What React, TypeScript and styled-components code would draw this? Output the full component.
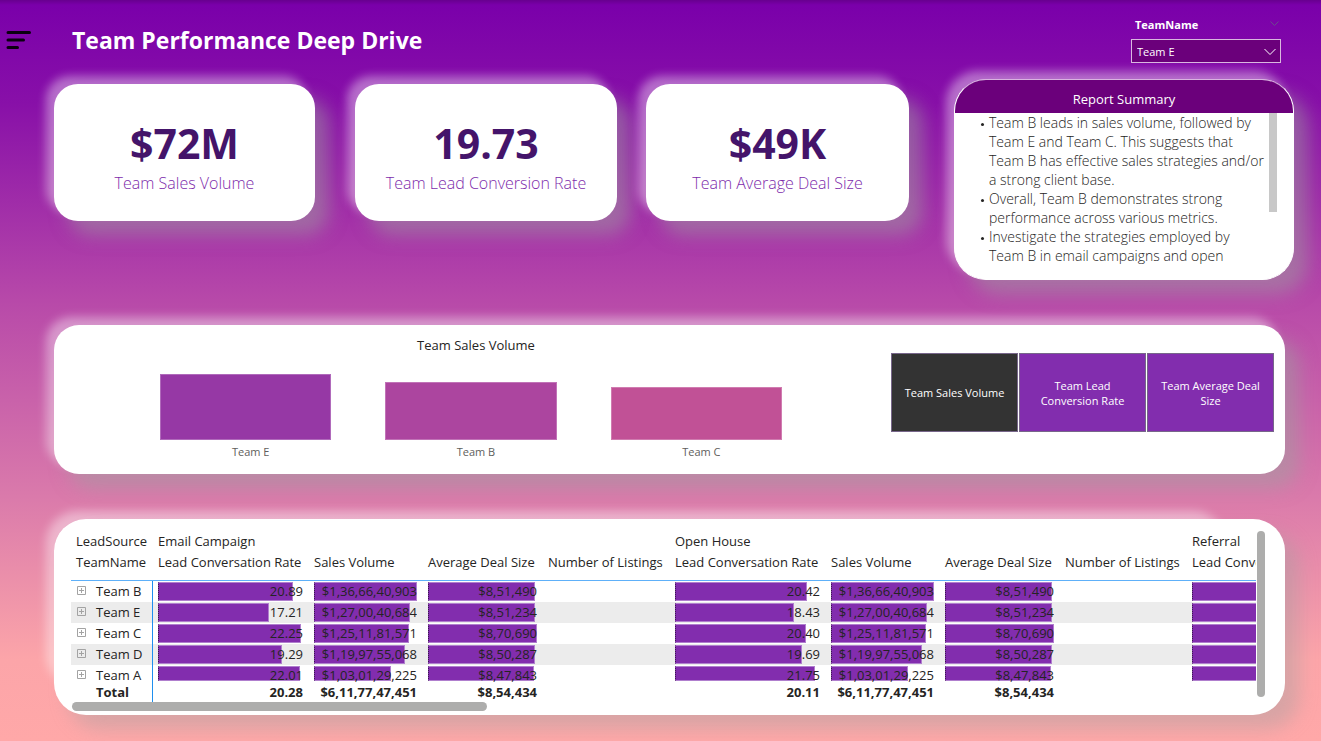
import React from "react";
import styled, { createGlobalStyle, css } from "styled-components";

const PURPLE = "#822dae";
const PLUM = "#6b007b";

const GlobalStyle = createGlobalStyle`
  *, *::before, *::after { box-sizing: border-box; }
  html, body { margin: 0; }
  body {
    min-height: 100vh;
    font-family: "Open Sans", "Noto Sans", sans-serif;
    font-size: 13px;
    color: #252423;
    background: linear-gradient(180deg, #68008f 0px, #7a00aa 5px, #8810a8 14%, #b84aa9 41%, #da7aab 67%, #fca5a9 89%, #ffa8a8 100%) no-repeat;
  }
  button, select { font: inherit; margin: 0; }
  h1, h2, p, ul { margin: 0; padding: 0; }
`;

const raised = css`
  background: #fff;
  box-shadow:
    -8px -8px 10px rgba(255, 255, 255, 0.4),
    14px 14px 18px rgba(160, 160, 160, 0.5);
`;

const Page = styled.div`
  position: relative;
  z-index: 0;
  min-height: 100vh;
  padding-bottom: 26px;
`;

const Header = styled.header`
  display: flex;
  align-items: flex-start;
  height: 79px;
  padding: 0 40px 0 6px;
`;

const MenuButton = styled.button`
  display: flex;
  width: 26px;
  height: 20px;
  margin-top: 30px;
  padding: 0;
  border: 0;
  background: none;
`;

const Title = styled.h1`
  flex: 1;
  margin-left: 40px;
  padding-top: 24px;
  color: #fff;
  font-size: 23px;
  line-height: 32px;
  font-weight: 700;
`;

const Slicer = styled.div`
  width: 150px;
  padding-top: 17px;
  color: #fff;
`;

const SlicerLabel = styled.label`
  display: flex;
  justify-content: space-between;
  height: 16px;
  margin-bottom: 6px;
  padding: 0 2px 0 4px;
  font-size: 11px;
  line-height: 16px;
  font-weight: 700;
`;

const SlicerMenuIcon = styled.svg`
  margin-top: 4px;
`;

const SelectBox = styled.div`
  position: relative;
`;

const Select = styled.select`
  display: block;
  width: 100%;
  height: 24px;
  padding: 0 5px;
  appearance: none;
  border: 1px solid #d9b8df;
  border-radius: 0;
  background: ${PLUM};
  color: #fff;
  font-size: 11px;
`;

const SelectArrow = styled.svg`
  position: absolute;
  top: 9px;
  right: 5px;
  pointer-events: none;
`;

const Overview = styled.section`
  display: grid;
  grid-template-columns: 261fr 40px 262fr 29px 263fr 45px 340fr;
  align-items: start;
  padding: 0 27px 0 54px;
`;

const KpiCard = styled.article<{ $column: number }>`
  ${raised}
  grid-column: ${(p) => p.$column};
  min-height: 137px;
  margin-top: 5px;
  padding: 35px 12px 24px;
  border-radius: 24px;
  text-align: center;
`;

const KpiValue = styled.p`
  color: #44146a;
  font-size: 41px;
  line-height: 48px;
  font-weight: 700;
`;

const KpiLabel = styled.p`
  margin-top: 4px;
  color: #7d2bab;
  font-size: 16px;
  line-height: 24px;
  font-weight: 350;
  white-space: nowrap;
`;

const Summary = styled.article`
  ${raised}
  grid-column: 7;
  overflow: hidden;
  padding-bottom: 15px;
  border: 1px solid #d9b3e0;
  border-color: #d9b3e0 #fff #fff;
  border-radius: 32px;
`;

const SummaryTitle = styled.h2`
  height: 33px;
  background: ${PLUM};
  color: #fff;
  font-size: 13px;
  line-height: 38px;
  font-weight: 400;
  text-align: center;
`;

const SummaryBody = styled.div`
  display: flex;
  height: 151px;
  padding: 0 16px 0 20px;
`;

const SummaryList = styled.ul`
  flex: 1;
  overflow: hidden;
  padding-left: 14px;
  list-style: none;
  font-size: 14px;
  line-height: 19px;
  font-weight: 350;
  white-space: nowrap;
`;

const SummaryItem = styled.li`
  position: relative;

  &::before {
    content: "";
    position: absolute;
    top: 10px;
    left: -8px;
    width: 3px;
    height: 3px;
    border-radius: 50%;
    background: #252423;
  }
`;

const SummaryThumb = styled.div`
  width: 8px;
  height: 99px;
  background: #c8c8c8;
`;

const ChartPanel = styled.section`
  ${raised}
  display: flex;
  min-height: 149px;
  margin: 45px 36px 0 54px;
  padding: 0 11px 0 7px;
  border-radius: 25px;
`;

const Chart = styled.figure`
  flex: 1;
  margin: 0;
  padding: 10px 82px 0 72px;
`;

const ChartTitle = styled.figcaption`
  height: 20px;
  padding-left: 10px;
  line-height: 20px;
  text-align: center;
`;

const Bars = styled.div`
  display: grid;
  grid-template-columns: repeat(3, 1fr);
  align-items: end;
  justify-items: center;
  height: 105px;
`;

const BarGroup = styled.div`
  width: 76%;
`;

const Bar = styled.div<{ $color: string }>`
  background: ${(p) => p.$color};
  border: 1px solid rgba(255, 255, 255, 0.25);
`;

const BarLabel = styled.div`
  padding: 4px 0 0 10px;
  color: #605e5c;
  font-size: 11px;
  line-height: 16px;
  text-align: center;
`;

const MetricButtons = styled.div`
  display: grid;
  grid-template-columns: repeat(3, 1fr);
  gap: 1px;
  width: 383px;
  height: 79px;
  margin-top: 28px;
`;

const MetricButton = styled.button<{ $active?: boolean }>`
  padding: 0 12px;
  border: 1px solid #77668a;
  background: ${(p) => (p.$active ? "#333" : PURPLE)};
  color: #fff;
  font-size: 11px;
  line-height: 15px;
`;

const MatrixPanel = styled.section`
  position: relative;
  display: grid;
  grid-template-columns: minmax(0, 1fr) 8px;
  column-gap: 1px;
  margin: 45px 36px 0 54px;
  padding: 12px 20px 4px 17px;
  border-radius: 32px;
  background: #fff;
  box-shadow: 14px 14px 18px rgba(160, 160, 160, 0.4);

  &::before {
    content: "";
    position: absolute;
    z-index: -1;
    inset: 0 52px 20px 0;
    border-radius: 32px;
    box-shadow: -8px -8px 10px rgba(255, 255, 255, 0.4);
  }
`;

const MatrixView = styled.div`
  overflow: hidden;
  height: 171px;
`;

const VerticalThumb = styled.div`
  width: 8px;
  height: 166px;
  border-radius: 4px;
  background: #adadac;
`;

const HorizontalThumb = styled.div`
  width: 35%;
  height: 9px;
  margin-left: 1px;
  border-radius: 5px;
  background: #adadac;
`;

const Matrix = styled.table`
  width: 1272px;
  table-layout: fixed;
  border-collapse: separate;
  border-spacing: 0;
  white-space: nowrap;
`;

const HeadCell = styled.th<{ $last?: boolean }>`
  height: ${(p) => (p.$last ? 29 : 21)}px;
  padding: 0 0 0 5px;
  border-bottom: ${(p) => (p.$last ? "1px solid #5eb0f9" : "0")};
  vertical-align: top;
  font-weight: 400;
  line-height: 21px;
  text-align: left;
`;

const BodyRow = styled.tr<{ $shaded: boolean }>`
  background: ${(p) => (p.$shaded ? "#ececec" : "#fff")};
`;

const NameCell = styled.th<{ $total?: boolean }>`
  padding: 0 0 0 ${(p) => (p.$total ? 25 : 6)}px;
  border-right: 1px solid #1f8fef;
  font-weight: ${(p) => (p.$total ? 700 : 400)};
  line-height: 20px;
  text-align: left;
`;

const NameInner = styled.div<{ $clipped: boolean }>`
  display: flex;
  gap: 10px;
  height: ${(p) => (p.$clipped ? 17 : 21)}px;
  overflow: hidden;
  line-height: 21px;
`;

const ExpandButton = styled.button`
  flex: none;
  width: 9px;
  height: 9px;
  margin-top: 5px;
  padding: 0;
  border: 0;
  background: none;

  svg { display: block; }
`;

const ValueCell = styled.td`
  padding: 0 6px 0 5px;
  text-align: right;
`;

const ValueInner = styled.div<{ $clipped: boolean }>`
  position: relative;
  height: ${(p) => (p.$clipped ? 17 : 21)}px;
  overflow: hidden;
  line-height: 21px;
`;

const DataBar = styled.span`
  position: absolute;
  top: 1px;
  bottom: 1px;
  left: 0;
  background: ${PURPLE};
  border: 1px solid #b07fce;
  border-left: 1px dotted #3a1a4c;
`;

const ValueText = styled.span`
  position: relative;
`;

const TotalCell = styled.td`
  height: 20px;
  padding: 0 6px 0 5px;
  font-weight: 700;
  line-height: 20px;
  text-align: right;
`;

const kpis = [
  { value: "$72M", label: "Team Sales Volume", column: 1 },
  { value: "19.73", label: "Team Lead Conversion Rate", column: 3 },
  { value: "$49K", label: "Team Average Deal Size", column: 5 },
];

const summary = [
  ["Team B leads in sales volume, followed by", "Team E and Team C. This suggests that", "Team B has effective sales strategies and/or", "a strong client base."],
  ["Overall, Team B demonstrates strong", "performance across various metrics."],
  ["Investigate the strategies employed by", "Team B in email campaigns and open"],
];

const bars = [
  { name: "Team E", height: 66, color: "#9638a5" },
  { name: "Team B", height: 58, color: "#ac459f" },
  { name: "Team C", height: 53, color: "#c15196" },
];

const columns = ["Lead Conversation Rate", "Sales Volume", "Average Deal Size", "Number of Listings"];
const columnWidths = [156, 114, 120, 127];

const rows = [
  { team: "Team B", email: 20.89, open: 20.42, sales: "$1,36,66,40,903", salesBar: 100, deal: "$8,51,490", dealBar: 98 },
  { team: "Team E", email: 17.21, open: 18.43, sales: "$1,27,00,40,684", salesBar: 93, deal: "$8,51,234", dealBar: 98 },
  { team: "Team C", email: 22.25, open: 20.4, sales: "$1,25,11,81,571", salesBar: 92, deal: "$8,70,690", dealBar: 100 },
  { team: "Team D", email: 19.29, open: 19.69, sales: "$1,19,97,55,068", salesBar: 88, deal: "$8,50,287", dealBar: 98 },
  { team: "Team A", email: 22.01, open: 21.75, sales: "$1,03,01,29,225", salesBar: 75, deal: "$8,47,843", dealBar: 97 },
];

const MAX_RATE = 22.5;

function Value({ text, percent, clipped }: { text?: string; percent: number; clipped: boolean }) {
  return (
    <ValueCell>
      <ValueInner $clipped={clipped}>
        <DataBar style={{ width: `${percent}%` }} />
        {text && <ValueText>{text}</ValueText>}
      </ValueInner>
    </ValueCell>
  );
}

function MatrixTable() {
  return (
    <Matrix>
      <colgroup>
        <col style={{ width: 82 }} />
        {[...columnWidths, ...columnWidths, columnWidths[0]].map((w, i) => (
          <col key={i} style={{ width: w }} />
        ))}
      </colgroup>
      <thead>
        <tr>
          <HeadCell scope="col">LeadSource</HeadCell>
          <HeadCell scope="colgroup" colSpan={4}>Email Campaign</HeadCell>
          <HeadCell scope="colgroup" colSpan={4}>Open House</HeadCell>
          <HeadCell scope="colgroup">Referral</HeadCell>
        </tr>
        <tr>
          <HeadCell scope="col" $last>TeamName</HeadCell>
          {[...columns, ...columns, columns[0]].map((name, i) => (
            <HeadCell key={i} scope="col" $last>{name}</HeadCell>
          ))}
        </tr>
      </thead>
      <tbody>
        {rows.map((row, i) => {
          const clipped = i === rows.length - 1;
          return (
            <BodyRow key={row.team} $shaded={i % 2 === 1}>
              <NameCell scope="row">
                <NameInner $clipped={clipped}>
                  <ExpandButton aria-label={`Expand ${row.team}`}>
                    <svg width="9" height="9" viewBox="0 0 9 9" fill="none" stroke="#a3a3a3">
                      <path d="M0.5 0.5h8v8h-8zM2 4.5h5M4.5 2v5" />
                    </svg>
                  </ExpandButton>
                  {row.team}
                </NameInner>
              </NameCell>
              {[row.email, row.open].map((rate, g) => (
                <React.Fragment key={g}>
                  <Value text={rate.toFixed(2)} percent={(rate / MAX_RATE) * 100} clipped={clipped} />
                  <Value text={row.sales} percent={row.salesBar} clipped={clipped} />
                  <Value text={row.deal} percent={row.dealBar} clipped={clipped} />
                  <td />
                </React.Fragment>
              ))}
              <Value percent={95} clipped={clipped} />
            </BodyRow>
          );
        })}
      </tbody>
      <tfoot>
        <tr>
          <NameCell scope="row" $total>Total</NameCell>
          {["20.28", "20.11"].map((rate) => (
            <React.Fragment key={rate}>
              <TotalCell>{rate}</TotalCell>
              <TotalCell>$6,11,77,47,451</TotalCell>
              <TotalCell>$8,54,434</TotalCell>
              <TotalCell />
            </React.Fragment>
          ))}
          <TotalCell />
        </tr>
      </tfoot>
    </Matrix>
  );
}

export default function App() {
  return (
    <Page>
      <GlobalStyle />
      <Header>
        <MenuButton aria-label="Menu">
          <svg width="26" height="20" viewBox="0 0 26 20" stroke="#0a0010" strokeWidth="3" strokeLinecap="round">
            <path d="M2 2.5H23.5M2 10H17.5M2 17.5H11.5" />
          </svg>
        </MenuButton>
        <Title>Team Performance Deep Drive</Title>
        <Slicer>
          <SlicerLabel htmlFor="team">
            TeamName
            <SlicerMenuIcon width="9" height="6" viewBox="0 0 9 6" fill="none" stroke="#6b4a8c">
              <path d="M0.5 0.5l4 4 4-4" />
            </SlicerMenuIcon>
          </SlicerLabel>
          <SelectBox>
            <Select id="team" defaultValue="Team E">
              <option>Team E</option>
            </Select>
            <SelectArrow width="12" height="8" viewBox="0 0 12 8" fill="none" stroke="#fff">
              <path d="M0.5 1l5.5 5.5L11.5 1" />
            </SelectArrow>
          </SelectBox>
        </Slicer>
      </Header>

      <Overview>
        {kpis.map((kpi) => (
          <KpiCard key={kpi.label} $column={kpi.column}>
            <KpiValue>{kpi.value}</KpiValue>
            <KpiLabel>{kpi.label}</KpiLabel>
          </KpiCard>
        ))}
        <Summary>
          <SummaryTitle>Report Summary</SummaryTitle>
          <SummaryBody>
            <SummaryList>
              {summary.map((lines) => (
                <SummaryItem key={lines[0]}>
                  {lines.map((line) => (
                    <React.Fragment key={line}>
                      {line}
                      <br />
                    </React.Fragment>
                  ))}
                </SummaryItem>
              ))}
            </SummaryList>
            <SummaryThumb />
          </SummaryBody>
        </Summary>
      </Overview>

      <ChartPanel>
        <Chart>
          <ChartTitle>Team Sales Volume</ChartTitle>
          <Bars>
            {bars.map((bar) => (
              <BarGroup key={bar.name}>
                <Bar $color={bar.color} style={{ height: bar.height }} />
                <BarLabel>{bar.name}</BarLabel>
              </BarGroup>
            ))}
          </Bars>
        </Chart>
        <MetricButtons>
          <MetricButton $active>Team Sales Volume</MetricButton>
          <MetricButton>Team Lead Conversion Rate</MetricButton>
          <MetricButton>Team Average Deal Size</MetricButton>
        </MetricButtons>
      </ChartPanel>

      <MatrixPanel>
        <MatrixView>
          <MatrixTable />
        </MatrixView>
        <VerticalThumb />
        <HorizontalThumb />
      </MatrixPanel>
    </Page>
  );
}
